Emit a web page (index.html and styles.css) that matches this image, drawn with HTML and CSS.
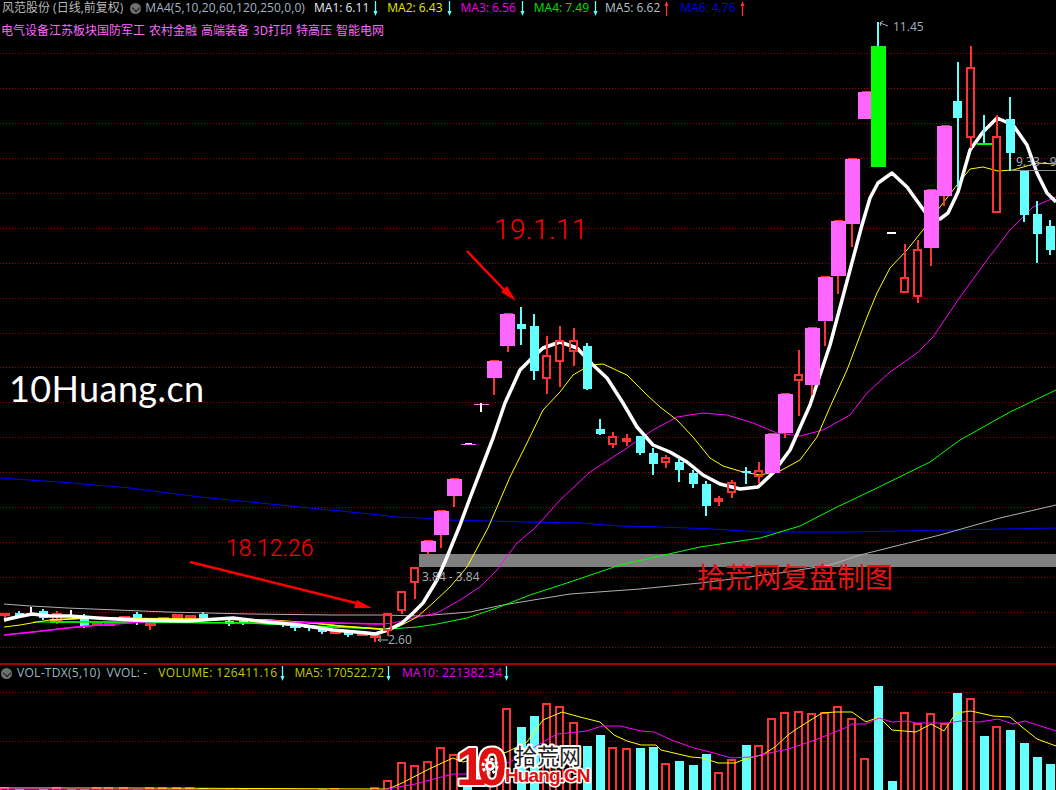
FILE: index.html
```html
<!DOCTYPE html>
<html lang="zh-CN">
<head>
<meta charset="utf-8">
<title>风范股份 K线图</title>
<link rel="stylesheet" href="styles.css">
</head>
<body>
<main class="chart">
  <section class="pane price-pane">
    <svg class="canvas" viewBox="0 0 1056 664" aria-hidden="true">
      <path class="grid" d="M0 53.5H1056M0 88.5H1056M0 123.5H1056M0 158.5H1056M0 193.5H1056M0 228.5H1056M0 263.5H1056M0 298.5H1056M0 333.5H1056M0 367.5H1056M0 402.5H1056M0 437.5H1056M0 472.5H1056M0 507.5H1056M0 542.5H1056M0 577.5H1056M0 612.5H1056M0 647.5H1056"/>
      <rect class="band" x="419" y="554" width="637" height="13"/>

      <!-- flat stretch: candles sit under the averages -->
      <path class="wick-cyan" d="M19 611V618M43 609V620M84 614V628M137 612V625M203 612V620M229 619V626M243 619V625M283 620V627M295 625V631M309 625V631M322 626V634M348 631V637"/>
      <path class="fill-cyan" d="M15 613h9v3h-9zM39 611h9v7h-9zM80 617h9v9h-9zM133 614h9v9h-9zM199 614h9v4h-9zM225 621h9v3h-9zM239 621h9v2h-9zM279 622h9v3h-9zM290 626h11v2h-11zM304 626h11v2h-11zM318 628h9v4h-9zM344 632h9v3h-9z"/>
      <path class="wick-red" d="M5 616V622M150 626V630M375 638V642M57 611V624M124 620V623M190 620V623"/>
      <path class="fill-red" d="M0 613h10v3h-10zM92 623h11v3h-11zM104 623h11v3h-11zM119 616h11v4h-11zM145 622h11v4h-11zM158 617h11v3h-11zM172 614h11v5h-11zM185 615h11v5h-11zM330 631h11v3h-11zM357 634h11v2h-11zM370 635h11v3h-11z"/>
      <path class="hollow-red" d="M53 614h8v7h-8z"/>
      <path class="wick-white" d="M31 607V613M71 610V616"/>

      <polyline class="ma ma6" points="0,478 60,482 130,488 200,497 290,506 370,514 397,517 420,518 450,520 527,522 580,523 620,526 660,527 713,529 760,532 850,532 950,530 1056,528"/>
      <polyline class="ma ma5" points="4,604 30,606 50,607 67,608 117,610 167,612 250,614 333,615 383,615 420,616 470,612 503,605 570,594 640,589 700,583 780,573 830,565 860,555 900,545 940,535 1000,518 1056,505"/>
      <polyline class="ma ma4" points="33,622 100,622 250,623 333,627 390,629 417,627 437,624 467,618 497,608 530,595 570,582 620,565 700,547 760,538 800,526 835,508 875,489 930,462 960,440 1010,412 1056,390"/>
      <polyline class="ma ma3" points="4,635 33,632 67,628 100,625 143,622 177,620 233,619 293,622 333,623 383,624 393,623 413,618 437,613 460,600 480,587 497,570 517,543 535,528 560,500 590,472 627,448 653,430 677,417 703,413 727,415 753,423 777,433 800,436 823,430 850,415 867,393 890,372 917,353 933,337 960,297 987,260 1010,230 1033,207 1056,197"/>
      <polyline class="ma ma2" points="4,627 20,625 37,622 50,620 90,618 103,618 180,619 267,620 313,623 340,626 367,628 390,630 400,626 417,617 433,603 450,587 467,567 488,528 510,477 527,443 543,410 560,392 573,375 590,365 603,364 627,375 647,395 660,407 677,420 693,437 710,458 723,466 743,472 760,475 780,471 800,460 817,437 830,407 847,370 867,317 877,293 890,268 907,250 923,230 940,207 957,185 970,169 983,167 998,171 1013,170 1037,163 1056,164"/>
      <polyline class="ma-flat flat-green" points="50,622 100,622 250,623 333,627 390,629"/>
      <polyline class="ma-flat flat-yellow" points="50,620 90,618 103,618 180,619 267,620 313,623 340,626 367,628 390,630"/>
      <polyline class="ma-flat flat-magenta" points="4,635 33,632 67,628 100,625 143,622 177,620 233,619 293,622 333,623 383,624"/>
      <polyline class="ma ma1" points="4,620 17,617 32,614 50,616 70,616 97,618 133,620 187,621 233,618 267,622 300,625 333,630 367,633 375,634 388,630 402,623 413,613 423,603 437,580 447,557 460,525 470,498 480,472 493,438 505,403 520,370 530,360 543,348 560,342 577,348 593,365 607,378 623,403 637,427 653,445 670,452 687,462 703,475 720,484 740,489 758,487 773,473 790,450 810,405 830,345 850,270 862,225 870,198 878,183 892,173 907,187 925,212 940,219 948,213 958,192 970,150 983,132 997,118 1013,125 1027,145 1037,173 1047,193 1056,202"/>

      <!-- candles -->
      <path class="wick-red" d="M388 631V636M402 611V614M415 583V599M428 552V555M441 535V548M454 496V507M494 378V395M508 346V352M547 336V355M547 379V394M560 326V340M560 362V387M574 328V340M574 352V366M613 432V436M613 445V448M627 434V438M627 442V446M666 455V457M666 463V468M719 496V506M732 480V482M732 493V498M759 462V470M759 477V483M785 433V438M799 350V374M799 381V416M812 385V395M825 321V346M838 276V294M852 224V247M905 244V277M918 240V249M918 297V303M931 248V266M944 196V206M971 46V67M971 138V148M997 115V136"/>
      <path class="hollow-red" d="M384 614h7v16h-7zM398 592h7v18h-7zM411 568h7v14h-7zM543 356h7v22h-7zM556 341h7v20h-7zM570 341h7v10h-7zM609 437h7v7h-7zM623 439h7v2h-7zM662 458h7v4h-7zM715 499h7v2h-7zM728 483h7v9h-7zM755 471h7v5h-7zM795 375h7v5h-7zM901 278h7v14h-7zM914 250h7v46h-7zM967 68h7v69h-7zM993 137h7v75h-7z"/>
      <path class="wick-cyan" d="M521 307V345M534 314V380M587 343V390M600 419V435M640 453V455M653 448V475M679 458V482M693 470V488M706 481V516M746 467V484M878 22V46M958 62V187M984 115V144M1010 97V171M1024 171V222M1037 201V263M1050 220V255"/>
      <path class="fill-cyan" d="M517 324h9v5h-9zM530 326h9v45h-9zM583 346h9v43h-9zM596 429h9v5h-9zM636 436h9v17h-9zM649 453h9v11h-9zM675 462h9v8h-9zM689 473h9v11h-9zM702 484h9v22h-9zM742 471h9v2h-9zM953 101h9v17h-9zM1006 119h9v34h-9zM1020 171h9v44h-9zM1033 214h9v20h-9zM1046 226h9v24h-9z"/>
      <path class="fill-pink" d="M421 541h15v11h-15zM434 511h15v24h-15zM447 479h15v17h-15zM487 361h15v17h-15zM500 314h15v32h-15zM765 434h15v39h-15zM778 394h15v39h-15zM805 328h15v57h-15zM818 277h15v44h-15zM831 221h15v55h-15zM845 159h15v65h-15zM858 92h15v27h-15zM924 190h15v58h-15zM937 126h15v70h-15z"/>
      <path class="fill-red" d="M424 540h9v1h-9zM437 510h9v1h-9zM450 478h9v1h-9zM490 360h9v1h-9zM504 313h9v1h-9zM768 433h9v1h-9zM781 393h9v1h-9zM808 327h9v1h-9zM821 276h9v1h-9zM834 220h9v1h-9zM848 158h9v1h-9zM862 91h9v1h-9zM927 189h9v1h-9zM941 125h9v1h-9z"/>
      <rect class="fill-green" x="871" y="46" width="15" height="121"/>
      <rect class="fill-green" x="977" y="143" width="15" height="2"/>
      <rect class="fill-white" x="887" y="232" width="9" height="2"/>
      <rect class="fill-pink" x="461" y="444" width="15" height="1"/>
      <rect class="fill-white" x="465" y="443" width="7" height="1"/>
      <rect class="fill-pink" x="474" y="404" width="15" height="1"/>
      <path class="wick-white" d="M481 403V412"/>

      <!-- price labels -->
      <path class="pointer" d="M888 26L880 23M880 23L883 21M880 23L881 26M378 640H388M378 640L381 638M378 640L381 642"/>
      <text class="price-label" x="893" y="31">11.45</text>
      <text class="price-label" x="388" y="644">2.60</text>
      <rect class="fill-grey" x="1013" y="170" width="43" height="1"/>
      <text class="price-label" x="1016" y="166">9.33 - 9</text>
      <text class="price-label" x="422" y="581">3.84 - 3.84</text>

      <!-- annotations -->
      <text class="note note-large" x="494" y="239">19.1.11</text>
      <text class="note note-small" x="226" y="556">18.12.26</text>
      <path class="note-line" d="M467 251L508 294M190 562L360 604"/>
      <path class="note-head" d="M516 301L501 292L507 286ZM372 608L354 608L357 600Z"/>
      <text class="watermark" x="9" y="402">10Huang.cn</text>
      <text class="note note-cjk" x="697" y="588">拾荒网复盘制图</text>
    </svg>

    <div class="legend">
      <span class="item stock">风范股份 (日线,前复权)</span>
      <span class="toggle" aria-hidden="true"></span>
      <span class="item params">MA4(5,10,20,60,120,250,0,0)</span>
      <span class="item c-white">MA1: 6.11<svg class="updown" viewBox="0 0 7 15"><path class="down" d="M3.5 0V12"/><path class="head-down" d="M1.5 10H5.5L3.5 15Z"/></svg></span>
      <span class="item c-yellow">MA2: 6.43<svg class="updown" viewBox="0 0 7 15"><path class="down" d="M3.5 0V12"/><path class="head-down" d="M1.5 10H5.5L3.5 15Z"/></svg></span>
      <span class="item c-magenta">MA3: 6.56<svg class="updown" viewBox="0 0 7 15"><path class="down" d="M3.5 0V12"/><path class="head-down" d="M1.5 10H5.5L3.5 15Z"/></svg></span>
      <span class="item c-green">MA4: 7.49<svg class="updown" viewBox="0 0 7 15"><path class="down" d="M3.5 0V12"/><path class="head-down" d="M1.5 10H5.5L3.5 15Z"/></svg></span>
      <span class="item c-grey">MA5: 6.62<svg class="updown" viewBox="0 0 7 15"><path class="up" d="M3.5 15V3"/><path class="head-up" d="M1.5 5H5.5L3.5 0Z"/></svg></span>
      <span class="item c-blue">MA6: 4.76<svg class="updown" viewBox="0 0 7 15"><path class="up" d="M3.5 15V3"/><path class="head-up" d="M1.5 5H5.5L3.5 0Z"/></svg></span>
    </div>
    <div class="tags">
      <span>电气设备江苏板块国防军工</span><span>农村金融</span><span>高端装备</span><span>3D打印</span><span>特高压</span><span>智能电网</span>
    </div>
  </section>

  <section class="pane volume-pane">
    <svg class="canvas" viewBox="0 664 1056 126" aria-hidden="true">
      <path class="grid" d="M0 692.5H1056M0 741.5H1056"/>
      <path class="fill-cyan" d="M15 789h9v2h-9zM39 789h9v2h-9zM67 789h9v2h-9zM80 789h9v2h-9zM133 789h9v2h-9zM199 788h9v3h-9zM225 789h9v2h-9zM239 789h9v2h-9zM318 789h9v2h-9zM463 787h9v4h-9zM517 727h9v64h-9zM530 716h9v75h-9zM583 746h9v45h-9zM596 735h9v56h-9zM636 748h9v43h-9zM649 747h9v44h-9zM675 761h9v30h-9zM689 765h9v26h-9zM702 754h9v37h-9zM742 745h9v46h-9zM874 686h9v105h-9zM888 781h9v10h-9zM953 693h9v98h-9zM980 736h9v55h-9zM1006 730h9v61h-9zM1020 743h9v48h-9zM1033 757h9v34h-9zM1046 764h9v27h-9z"/>
      <path class="hollow-bar" d="M1 788h7v4h-7zM53 788h7v4h-7zM93 788h7v4h-7zM105 788h7v4h-7zM120 788h7v4h-7zM146 788h7v4h-7zM159 788h7v4h-7zM173 788h7v4h-7zM186 788h7v4h-7zM331 789h7v4h-7zM371 788h7v4h-7zM384 781h7v12h-7zM398 763h7v30h-7zM411 766h7v27h-7zM424 762h7v31h-7zM437 748h7v45h-7zM450 755h7v38h-7zM490 760h7v33h-7zM503 709h7v84h-7zM543 704h7v89h-7zM556 707h7v86h-7zM570 723h7v70h-7zM609 748h7v45h-7zM623 749h7v44h-7zM662 764h7v29h-7zM715 773h7v20h-7zM728 760h7v33h-7zM755 746h7v47h-7zM768 719h7v74h-7zM781 713h7v80h-7zM795 712h7v81h-7zM808 714h7v79h-7zM821 713h7v80h-7zM834 707h7v86h-7zM848 719h7v74h-7zM861 759h7v34h-7zM901 713h7v80h-7zM914 724h7v69h-7zM927 714h7v79h-7zM941 724h7v69h-7zM967 699h7v94h-7zM993 727h7v66h-7z"/>
      <polyline class="ma vol-yellow" points="0,788 130,788 380,789 388,789 402,783 429,769 453,758 463,762 485,757 507,752 527,742 543,720 562,712 580,717 600,722 614,735 627,741 641,745 656,745 661,750 674,753 691,757 703,758 718,763 735,763 748,758 762,755 775,747 788,735 798,728 822,713 835,712 852,712 866,722 879,717 892,730 916,732 931,724 944,731 956,713 971,711 993,716 1010,717 1022,727 1037,739 1056,746"/>
      <polyline class="ma vol-magenta" points="0,789 380,790 388,789 415,784 453,774 473,774 510,762 543,742 557,734 587,731 602,726 620,726 641,731 654,732 674,741 694,748 714,753 731,758 751,757 765,754 788,749 815,740 845,728 852,724 866,724 879,718 892,722 906,721 916,723 936,723 949,723 960,721 980,722 998,719 1013,724 1025,721 1056,731"/>
      <text class="logo-ten" x="456" y="785">10</text>
      <circle class="gear-ring" cx="490" cy="766" r="7"/>
      <circle class="gear-core" cx="490" cy="766" r="5"/>
      <circle class="gear-hub" cx="490" cy="766" r="2"/>
      <text class="logo-cn" x="515" y="764">拾荒网</text>
      <text class="logo-url" x="505" y="782">Huang.CN</text>
    </svg>

    <div class="legend volume-legend">
      <span class="toggle" aria-hidden="true"></span>
      <span class="item params label-vol">VOL-TDX(5,10)</span>
      <span class="item params label-vvol">VVOL: -</span>
      <span class="item c-olive label-volume">VOLUME: 126411.16<svg class="updown" viewBox="0 0 7 15"><path class="down" d="M3.5 0V12"/><path class="head-down" d="M1.5 10H5.5L3.5 15Z"/></svg></span>
      <span class="item c-olive label-ma5">MA5: 170522.72<svg class="updown" viewBox="0 0 7 15"><path class="down" d="M3.5 0V12"/><path class="head-down" d="M1.5 10H5.5L3.5 15Z"/></svg></span>
      <span class="item c-magenta label-ma10">MA10: 221382.34<svg class="updown" viewBox="0 0 7 15"><path class="down" d="M3.5 0V12"/><path class="head-down" d="M1.5 10H5.5L3.5 15Z"/></svg></span>
    </div>
  </section>
</main>
</body>
</html>
```
FILE: styles.css
```css
* { box-sizing: border-box; }
html, body { margin: 0; background: #000; }
body { width: 1056px; height: 790px; overflow: hidden; }

.chart {
  display: flex;
  flex-direction: column;
  width: 1056px;
  height: 790px;
  font-family: "Open Sans", "Noto Sans CJK SC", sans-serif;
  font-size: 12px;
  line-height: 16px;
}
.pane { position: relative; }
.price-pane { height: 664px; padding: 0 0 0 2px; }
.volume-pane { height: 126px; border-top: 2px solid #a00000; margin-top: -1px; }
.canvas { position: absolute; left: 0; top: 0; width: 1056px; height: 100%; display: block; }
.volume-pane .canvas { top: -1px; height: 126px; }

.legend {
  position: relative;
  display: flex;
  align-items: center;
  gap: 8px;
  height: 16px;
  white-space: nowrap;
}
.item { display: inline-flex; align-items: center; }
.stock { color: #b8b8b8; margin-right: -1px; }
.params { color: #a4b4c4; letter-spacing: 0.1px; margin-left: -4px; margin-right: 1px; }
.toggle {
  position: relative;
  flex: none;
  width: 11px;
  height: 11px;
  border-radius: 50%;
  background: #707070;
}
.toggle::after {
  content: "";
  position: absolute;
  left: 3px;
  top: 2px;
  width: 5px;
  height: 5px;
  border-right: 1.5px solid #1c1c1c;
  border-bottom: 1.5px solid #1c1c1c;
  transform: rotate(45deg);
}
.updown { width: 7px; height: 15px; margin-left: 3px; flex: none; }
.down, .up { fill: none; stroke-width: 1.3; }
.down { stroke: #66ffff; }
.up { stroke: #ff3333; }
.head-down { fill: #66ffff; }
.head-up { fill: #ff3333; }

.c-white { color: #e4ecf4; }
.c-yellow { color: #e6e600; }
.c-magenta { color: #ee00ee; }
.c-green { color: #00e000; margin-right: -2px; }
.c-grey { color: #b8c0c8; margin-right: 2px; }
.c-blue { color: #0000e8; }
.c-olive { color: #c8c800; }

.tags {
  position: relative;
  display: flex;
  gap: 4px;
  margin: 6px 0 0 -1px;
  height: 16px;
  color: #ff66ff;
  white-space: nowrap;
  font-family: "Noto Sans CJK SC", sans-serif;
}

.volume-legend { padding-left: 1px; gap: 0; }
.volume-legend .params { margin: 0; }
.volume-legend .label-vol { margin-left: 5px; letter-spacing: 0.3px; }
.volume-legend .label-vvol { margin-left: 6px; }
.label-volume { margin-left: 11px; letter-spacing: 0.35px; }
.label-ma5 { margin-left: 9px; }
.label-ma10 { margin-left: 10px; letter-spacing: 0.25px; }
.volume-legend .updown { margin-left: 1px; }

/* chart marks */
.grid { fill: none; stroke: #a00000; stroke-width: 1; stroke-dasharray: 1 2; }
.band { fill: #808080; }
.ma { fill: none; stroke-width: 1; stroke-linejoin: round; }
.ma-flat { fill: none; stroke-width: 1.5; stroke-linejoin: round; }
.flat-green { stroke: #00ff00; }
.flat-yellow { stroke: #ffff00; }
.flat-magenta { stroke: #ff00ff; }
.ma1 { stroke: #fff; stroke-width: 3.5; }
.ma2, .vol-yellow { stroke: #ffff00; }
.ma3, .vol-magenta { stroke: #ff00ff; }
.ma4 { stroke: #00ff00; }
.ma5 { stroke: #b0b0b0; }
.ma6 { stroke: #0000ff; }

.wick-red { fill: none; stroke: #ff3333; stroke-width: 2; }
.wick-cyan { fill: none; stroke: #66ffff; stroke-width: 2; }
.wick-white { fill: none; stroke: #fff; stroke-width: 2; }
.hollow-red, .hollow-bar { fill: none; stroke: #ff3333; stroke-width: 2; }
.fill-cyan { fill: #66ffff; }
.fill-pink { fill: #ff66ff; }
.fill-red { fill: #ff3333; }
.fill-green { fill: #00ff00; }
.fill-white { fill: #fff; }
.fill-grey { fill: #909090; }

.pointer { fill: none; stroke: #a8b0b8; stroke-width: 1; }
.price-label { fill: #a4b0bc; font-size: 12px; font-family: "Open Sans", sans-serif; }

.note { fill: #ff0000; }
.note-large { font: 300 28px Roboto, "Liberation Sans", sans-serif; letter-spacing: 0.4px; }
.note-small { font: 300 23px Roboto, "Liberation Sans", sans-serif; }
.note-cjk { font: 28px "Noto Sans CJK SC", sans-serif; fill: #e81414; }
.note-line { fill: none; stroke: #ff0000; stroke-width: 2.5; }
.note-head { fill: #ff0000; }
.watermark { fill: #fff; font: 36px Lato, sans-serif; letter-spacing: 0.4px; }

.logo-ten, .logo-cn, .logo-url { paint-order: stroke; stroke: #fff; stroke-linejoin: round; }
.logo-ten { font: 700 54px "Liberation Sans", sans-serif; fill: #e01010; stroke-width: 4; letter-spacing: -9px; }
.logo-cn { font: 22px "Noto Sans CJK SC", sans-serif; fill: #222; stroke-width: 4; }
.logo-url { font: 700 19px "Liberation Sans", sans-serif; fill: #e01010; stroke-width: 3; letter-spacing: -0.9px; }
.gear-ring { fill: none; stroke: #fff; stroke-width: 3; stroke-dasharray: 3 2.5; }
.gear-core { fill: #fff; }
.gear-hub { fill: #e01010; }
```
